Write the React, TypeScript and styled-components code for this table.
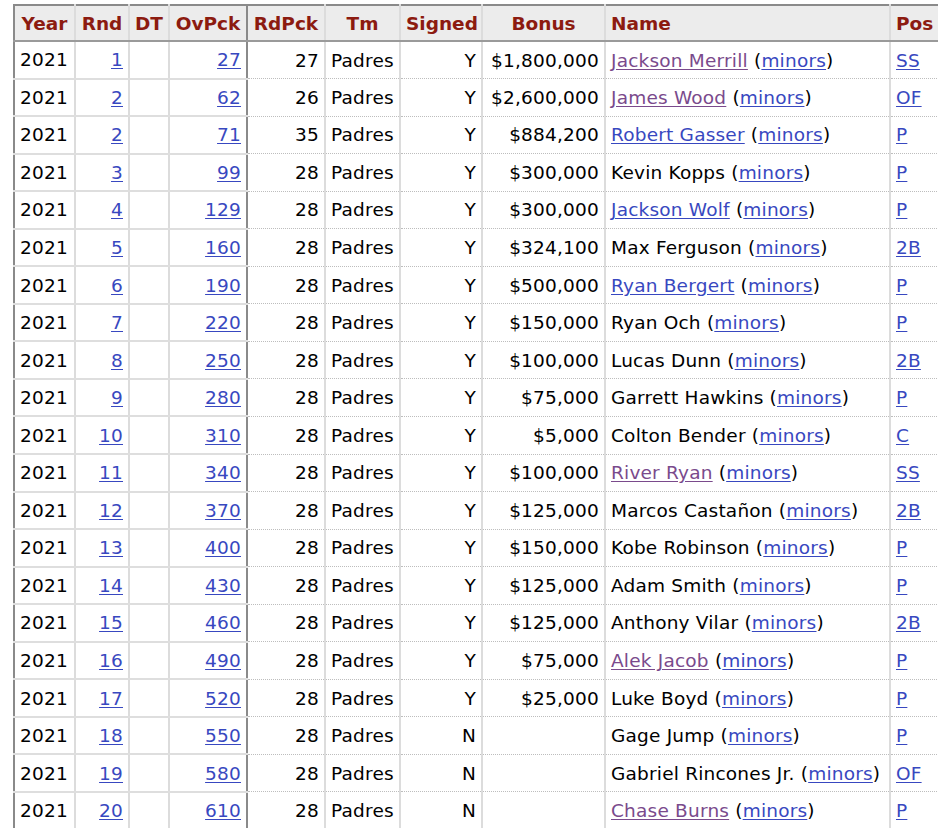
import React from "react";
import styled, { createGlobalStyle } from "styled-components";

const GlobalStyle = createGlobalStyle`
  html, body {
    margin: 0;
    padding: 0;
    background: #fff;
    overflow: hidden;
  }
`;

const Page = styled.div`
  padding: 4px 0 0 13px;
  font-family: "DejaVu Sans", Verdana, sans-serif;
  font-size: 18.5px;
  color: #000;
`;

const Table = styled.table`
  border-collapse: collapse;
  table-layout: fixed;
  width: 930px;
  border-top: 2px solid #8a8a8a;
  border-left: 2px solid #8a8a8a;
`;

const Th = styled.th<{ $align?: string; $frozenEdge?: boolean }>`
  height: 34px;
  padding: 0 5px;
  background: #ececec;
  color: #8c1b10;
  font-weight: bold;
  text-align: ${(p) => p.$align || "center"};
  white-space: nowrap;
  border-bottom: 2px solid #9a9a9a;
  border-right: ${(p) => (p.$frozenEdge ? "2px solid #8a8a8a" : "2px solid #dcdcdc")};
`;

const Td = styled.td<{ $align?: string; $frozen?: boolean; $frozenEdge?: boolean }>`
  height: 37.55px;
  padding: 0 5px;
  box-sizing: border-box;
  letter-spacing: 0.2px;
  text-align: ${(p) => p.$align || "left"};
  white-space: nowrap;
  overflow: hidden;
  border-bottom: ${(p) => (p.$frozen ? "2px solid #dedede" : "1px dotted #bdbdbd")};
  border-right: ${(p) => (p.$frozenEdge ? "2px solid #8a8a8a" : "2px solid #dcdcdc")};
`;

const Link = styled.a<{ $visited?: boolean }>`
  color: ${(p) => (p.$visited ? "#7a4a8c" : "#3848c0")};
  text-decoration: underline;
  text-underline-offset: 2px;
  cursor: pointer;
`;

type Row = {
  rnd: number;
  ov: number;
  rd: number;
  signed: string;
  bonus: string;
  name: string;
  link?: "new" | "visited";
  pos: string;
};

const rows: Row[] = [
  { rnd: 1, ov: 27, rd: 27, signed: "Y", bonus: "$1,800,000", name: "Jackson Merrill", link: "visited", pos: "SS" },
  { rnd: 2, ov: 62, rd: 26, signed: "Y", bonus: "$2,600,000", name: "James Wood", link: "visited", pos: "OF" },
  { rnd: 2, ov: 71, rd: 35, signed: "Y", bonus: "$884,200", name: "Robert Gasser", link: "new", pos: "P" },
  { rnd: 3, ov: 99, rd: 28, signed: "Y", bonus: "$300,000", name: "Kevin Kopps", pos: "P" },
  { rnd: 4, ov: 129, rd: 28, signed: "Y", bonus: "$300,000", name: "Jackson Wolf", link: "new", pos: "P" },
  { rnd: 5, ov: 160, rd: 28, signed: "Y", bonus: "$324,100", name: "Max Ferguson", pos: "2B" },
  { rnd: 6, ov: 190, rd: 28, signed: "Y", bonus: "$500,000", name: "Ryan Bergert", link: "new", pos: "P" },
  { rnd: 7, ov: 220, rd: 28, signed: "Y", bonus: "$150,000", name: "Ryan Och", pos: "P" },
  { rnd: 8, ov: 250, rd: 28, signed: "Y", bonus: "$100,000", name: "Lucas Dunn", pos: "2B" },
  { rnd: 9, ov: 280, rd: 28, signed: "Y", bonus: "$75,000", name: "Garrett Hawkins", pos: "P" },
  { rnd: 10, ov: 310, rd: 28, signed: "Y", bonus: "$5,000", name: "Colton Bender", pos: "C" },
  { rnd: 11, ov: 340, rd: 28, signed: "Y", bonus: "$100,000", name: "River Ryan", link: "visited", pos: "SS" },
  { rnd: 12, ov: 370, rd: 28, signed: "Y", bonus: "$125,000", name: "Marcos Castañon", pos: "2B" },
  { rnd: 13, ov: 400, rd: 28, signed: "Y", bonus: "$150,000", name: "Kobe Robinson", pos: "P" },
  { rnd: 14, ov: 430, rd: 28, signed: "Y", bonus: "$125,000", name: "Adam Smith", pos: "P" },
  { rnd: 15, ov: 460, rd: 28, signed: "Y", bonus: "$125,000", name: "Anthony Vilar", pos: "2B" },
  { rnd: 16, ov: 490, rd: 28, signed: "Y", bonus: "$75,000", name: "Alek Jacob", link: "visited", pos: "P" },
  { rnd: 17, ov: 520, rd: 28, signed: "Y", bonus: "$25,000", name: "Luke Boyd", pos: "P" },
  { rnd: 18, ov: 550, rd: 28, signed: "N", bonus: "", name: "Gage Jump", pos: "P" },
  { rnd: 19, ov: 580, rd: 28, signed: "N", bonus: "", name: "Gabriel Rincones Jr.", pos: "OF" },
  { rnd: 20, ov: 610, rd: 28, signed: "N", bonus: "", name: "Chase Burns", link: "visited", pos: "P" },
];

const widths = [61, 54, 40, 78, 78, 75, 82, 123, 285, 54];

const App = () => {
  return (
    <Page>
      <GlobalStyle />
      <Table>
        <colgroup>
          {widths.map((w, i) => (
            <col key={i} style={{ width: w }} />
          ))}
        </colgroup>
        <thead>
          <tr>
            <Th>Year</Th>
            <Th>Rnd</Th>
            <Th>DT</Th>
            <Th $frozenEdge>OvPck</Th>
            <Th>RdPck</Th>
            <Th>Tm</Th>
            <Th>Signed</Th>
            <Th>Bonus</Th>
            <Th $align="left">Name</Th>
            <Th $align="left">Pos</Th>
          </tr>
        </thead>
        <tbody>
          {rows.map((r) => (
            <tr key={r.ov}>
              <Td $frozen>2021</Td>
              <Td $frozen $align="right">
                <Link>{r.rnd}</Link>
              </Td>
              <Td $frozen />
              <Td $frozen $frozenEdge $align="right">
                <Link>{r.ov}</Link>
              </Td>
              <Td $align="right">{r.rd}</Td>
              <Td>Padres</Td>
              <Td $align="right">{r.signed}</Td>
              <Td $align="right">{r.bonus}</Td>
              <Td>
                {r.link ? <Link $visited={r.link === "visited"}>{r.name}</Link> : r.name} (
                <Link>minors</Link>)
              </Td>
              <Td>
                <Link>{r.pos}</Link>
              </Td>
            </tr>
          ))}
        </tbody>
      </Table>
    </Page>
  );
};

export default App;
